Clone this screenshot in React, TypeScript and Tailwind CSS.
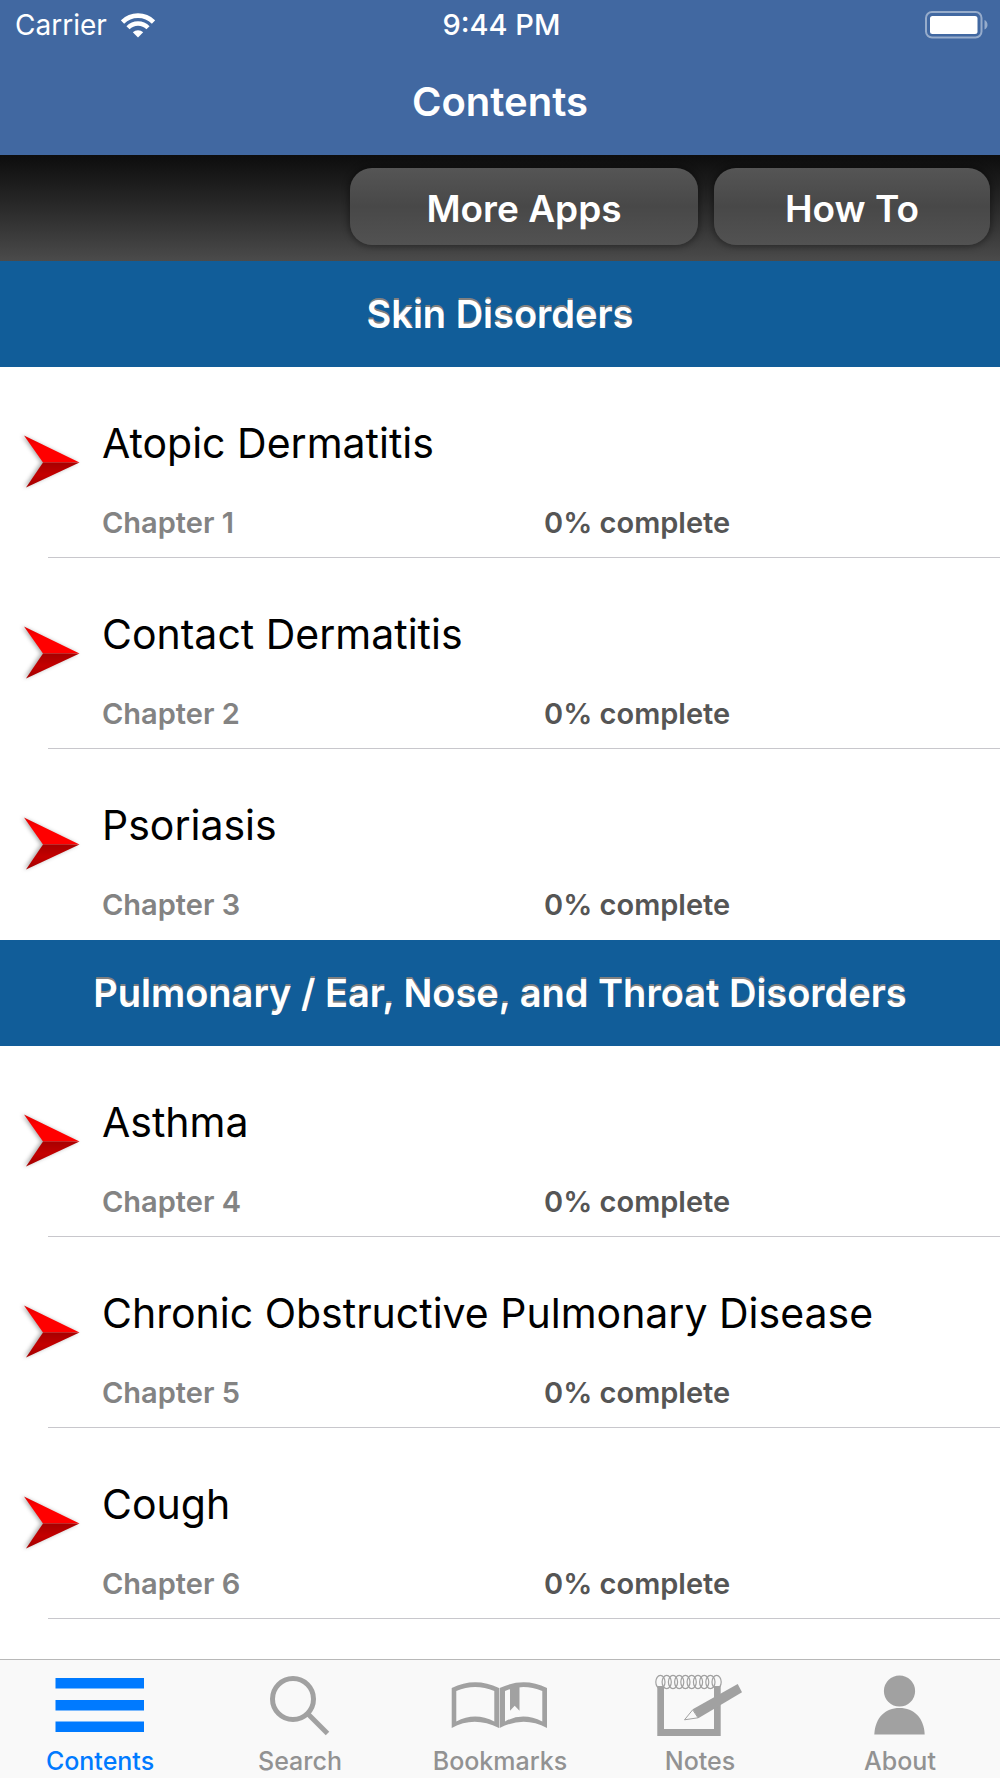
import type { ReactNode } from 'react';

type Chapter = { title: string; number: number; complete: number };

const sections: { heading: string; chapters: Chapter[]; more?: boolean }[] = [
  {
    heading: 'Skin Disorders',
    chapters: [
      { title: 'Atopic Dermatitis', number: 1, complete: 0 },
      { title: 'Contact Dermatitis', number: 2, complete: 0 },
      { title: 'Psoriasis', number: 3, complete: 0 },
    ],
  },
  {
    heading: 'Pulmonary / Ear, Nose, and Throat Disorders',
    more: true,
    chapters: [
      { title: 'Asthma', number: 4, complete: 0 },
      { title: 'Chronic Obstructive Pulmonary Disease', number: 5, complete: 0 },
      { title: 'Cough', number: 6, complete: 0 },
    ],
  },
];

const rings = [10.4, 16.7, 23, 29.2, 35.4, 41.7, 48, 54.2, 60.4, 66.6];

const tabs: { label: string; icon: ReactNode }[] = [
  {
    label: 'Contents',
    icon: (
      <g>
        <rect x="5.5" y="7" width="88.5" height="10.5" />
        <rect x="5.5" y="29" width="88.5" height="10.5" />
        <rect x="5.5" y="50.5" width="88.5" height="10.5" />
      </g>
    ),
  },
  {
    label: 'Search',
    icon: (
      <g fill="none" stroke="currentColor" strokeWidth="5">
        <circle cx="43" cy="28" r="20.5" />
        <path d="M58 43 L77.5 62.5" />
      </g>
    ),
  },
  {
    label: 'Bookmarks',
    icon: (
      <g>
        <path
          fillRule="evenodd"
          d="M1.7 17 Q25 5.5 49 17 V57 Q24 44.5 1.7 57 Z M6.3 20 V50.5 Q25 40.5 44.3 50.5 V20 Q25 12 6.3 20 Z"
        />
        <path
          fillRule="evenodd"
          d="M49.6 17 Q74 5.5 97 17 V57 Q74 44.5 49.6 57 Z M55 20 V50.5 Q73 40.5 92.3 50.5 V20 Q73 12 55 20 Z"
        />
        <path d="M60 15 H69.5 V39.7 L64.7 34.7 L60 39.7 Z" />
      </g>
    ),
  },
  {
    label: 'Notes',
    icon: (
      <g>
        <path d="M7.3 15 H14 V58 H64 V15 H70.7 V65 H7.3 Z" />
        <g fill="none" stroke="currentColor" strokeWidth="1.2">
          {rings.map((x) => (
            <ellipse key={x} cx={x} cy="11" rx="4.6" ry="6.6" />
          ))}
        </g>
        <path d="M42.7 38.3 L87.7 13 L92 21.3 L48.3 47.3 Z" />
        <path d="M42.7 38.8 L34.5 48.8 L48 46.8 Z" fill="#f9f9f9" stroke="currentColor" />
      </g>
    ),
  },
  {
    label: 'About',
    icon: (
      <g>
        <circle cx="49.5" cy="20" r="15.6" />
        <path d="M24.3 63.5 C25 47 35 37 49.5 37 C64 37 74 47 74.7 63.5 Z" />
      </g>
    ),
  },
];

function StatusBar() {
  return (
    <div className="grid h-[50px] grid-cols-3 items-center pr-3 pl-[15px]">
      <div className="flex items-center gap-[14px]">
        <span className="text-[28px] leading-8">Carrier</span>
        <svg width="34" height="25" viewBox="0 0 34 25" fill="none" stroke="white" aria-label="Wi-Fi">
          <path d="M1.5 9 A22 22 0 0 1 32.5 9" strokeWidth="4.6" />
          <path d="M7 14.7 A14 14 0 0 1 27 14.7" strokeWidth="4.4" />
          <path d="M17 24.5 L11.8 19.3 A7.5 7.5 0 0 1 22.2 19.3 Z" fill="white" stroke="none" />
        </svg>
      </div>
      <span className="text-center text-[29px] leading-8 font-medium">9:44 PM</span>
      <svg className="justify-self-end" width="63" height="28" viewBox="0 0 63 28" aria-label="Battery">
        <rect x="1" y="1" width="55.5" height="25.5" rx="6" fill="none" stroke="white" strokeOpacity="0.45" strokeWidth="2" />
        <rect x="5" y="5" width="47.5" height="18" rx="2.5" fill="white" />
        <path d="M59.5 9 Q62.5 10.5 62.5 13.7 Q62.5 17 59.5 18.5 Z" fill="white" fillOpacity="0.45" />
      </svg>
    </div>
  );
}

function Arrow() {
  return (
    <svg
      className="mt-[65px] drop-shadow-[-2px_0_2px_rgba(0,0,0,0.35)]"
      width="60"
      height="60"
      viewBox="0 0 60 60"
      aria-hidden="true"
    >
      <defs>
        <linearGradient id="arrow-top" x1="0" y1="0" x2="0" y2="1">
          <stop offset="0" stopColor="#e00000" />
          <stop offset="0.4" stopColor="#ff0000" />
          <stop offset="1" stopColor="#ff0000" />
        </linearGradient>
        <linearGradient id="arrow-bottom" x1="0" y1="0" x2="0" y2="1">
          <stop offset="0" stopColor="#a80000" />
          <stop offset="0.5" stopColor="#c40000" />
          <stop offset="1" stopColor="#a00000" />
        </linearGradient>
      </defs>
      <path d="M4 3.5 L59.5 30.5 H23 Z" fill="url(#arrow-top)" />
      <path d="M23 30.5 H59.5 L6 55.5 Z" fill="url(#arrow-bottom)" />
    </svg>
  );
}

function ChapterRow({ chapter, divider }: { chapter: Chapter; divider: boolean }) {
  return (
    <li>
      <a href={`#chapter-${chapter.number}`} className="flex h-[190px] pl-5">
        <Arrow />
        <div className="flex-1 pt-[52px] pl-[22px]">
          <div className="text-[41px] leading-[48px] text-black">{chapter.title}</div>
          <div className="mt-10 flex text-[29px] leading-8 font-semibold">
            <span className="w-[442px] text-[#838383]">Chapter {chapter.number}</span>
            <span className="text-[#555555]">{chapter.complete}% complete</span>
          </div>
        </div>
      </a>
      <div className={`ml-12 h-px ${divider ? 'bg-[#c8c7cc]' : 'bg-white'}`} />
    </li>
  );
}

function BarButton({ children, className }: { children: ReactNode; className: string }) {
  return (
    <button
      type="button"
      className={`h-[77px] rounded-[22px] bg-linear-to-b from-[#555555] via-[#484848] to-[#525252] pt-1 text-[37px] font-semibold text-white shadow-[0_0_6px_2px_rgba(0,0,0,0.35)] ${className}`}
    >
      {children}
    </button>
  );
}

export default function App() {
  return (
    <div className="flex min-h-screen flex-col bg-white font-['Inter','Liberation_Sans',sans-serif]">
      <header className="bg-[#4168a1] text-white">
        <StatusBar />
        <h1 className="pt-7 pb-[29px] text-center text-[40px] leading-[48px] font-semibold">Contents</h1>
      </header>

      <div className="flex h-[106px] items-start justify-end gap-4 bg-linear-to-b from-[#0d0d0d] to-[#4b4b4b] px-[10px] pt-[13px]">
        <BarButton className="w-[348px]">More Apps</BarButton>
        <BarButton className="w-[276px]">How To</BarButton>
      </div>

      <main className="flex-1">
        {sections.map((section) => (
          <section key={section.heading}>
            <h2 className="bg-[#115d99] py-[29px] text-center text-[38px] leading-[48px] font-semibold text-white [text-shadow:0_-2px_0_#808080]">
              {section.heading}
            </h2>
            <ul>
              {section.chapters.map((chapter, idx) => (
                <ChapterRow
                  key={chapter.number}
                  chapter={chapter}
                  divider={section.more || idx < section.chapters.length - 1}
                />
              ))}
            </ul>
          </section>
        ))}
      </main>

      {/* Bottom tab bar */}
      <nav className="sticky bottom-0 grid grid-cols-5 border-t border-[#b8b8b8] bg-[#f9f9f9]">
        {tabs.map((tab, idx) => (
          <button
            key={tab.label}
            type="button"
            className={`flex flex-col items-center pt-[11px] pb-[2px] ${idx === 0 ? 'text-[#007aff]' : 'text-[#929292]'}`}
          >
            <svg
              className={idx === 0 ? 'text-[#007aff]' : 'text-[#a1a1a1]'}
              width="100"
              height="76"
              viewBox="0 0 100 76"
              fill="currentColor"
              aria-hidden="true"
            >
              {tab.icon}
            </svg>
            <span className="text-[25px] leading-[29px] font-medium">{tab.label}</span>
          </button>
        ))}
      </nav>
    </div>
  );
}
